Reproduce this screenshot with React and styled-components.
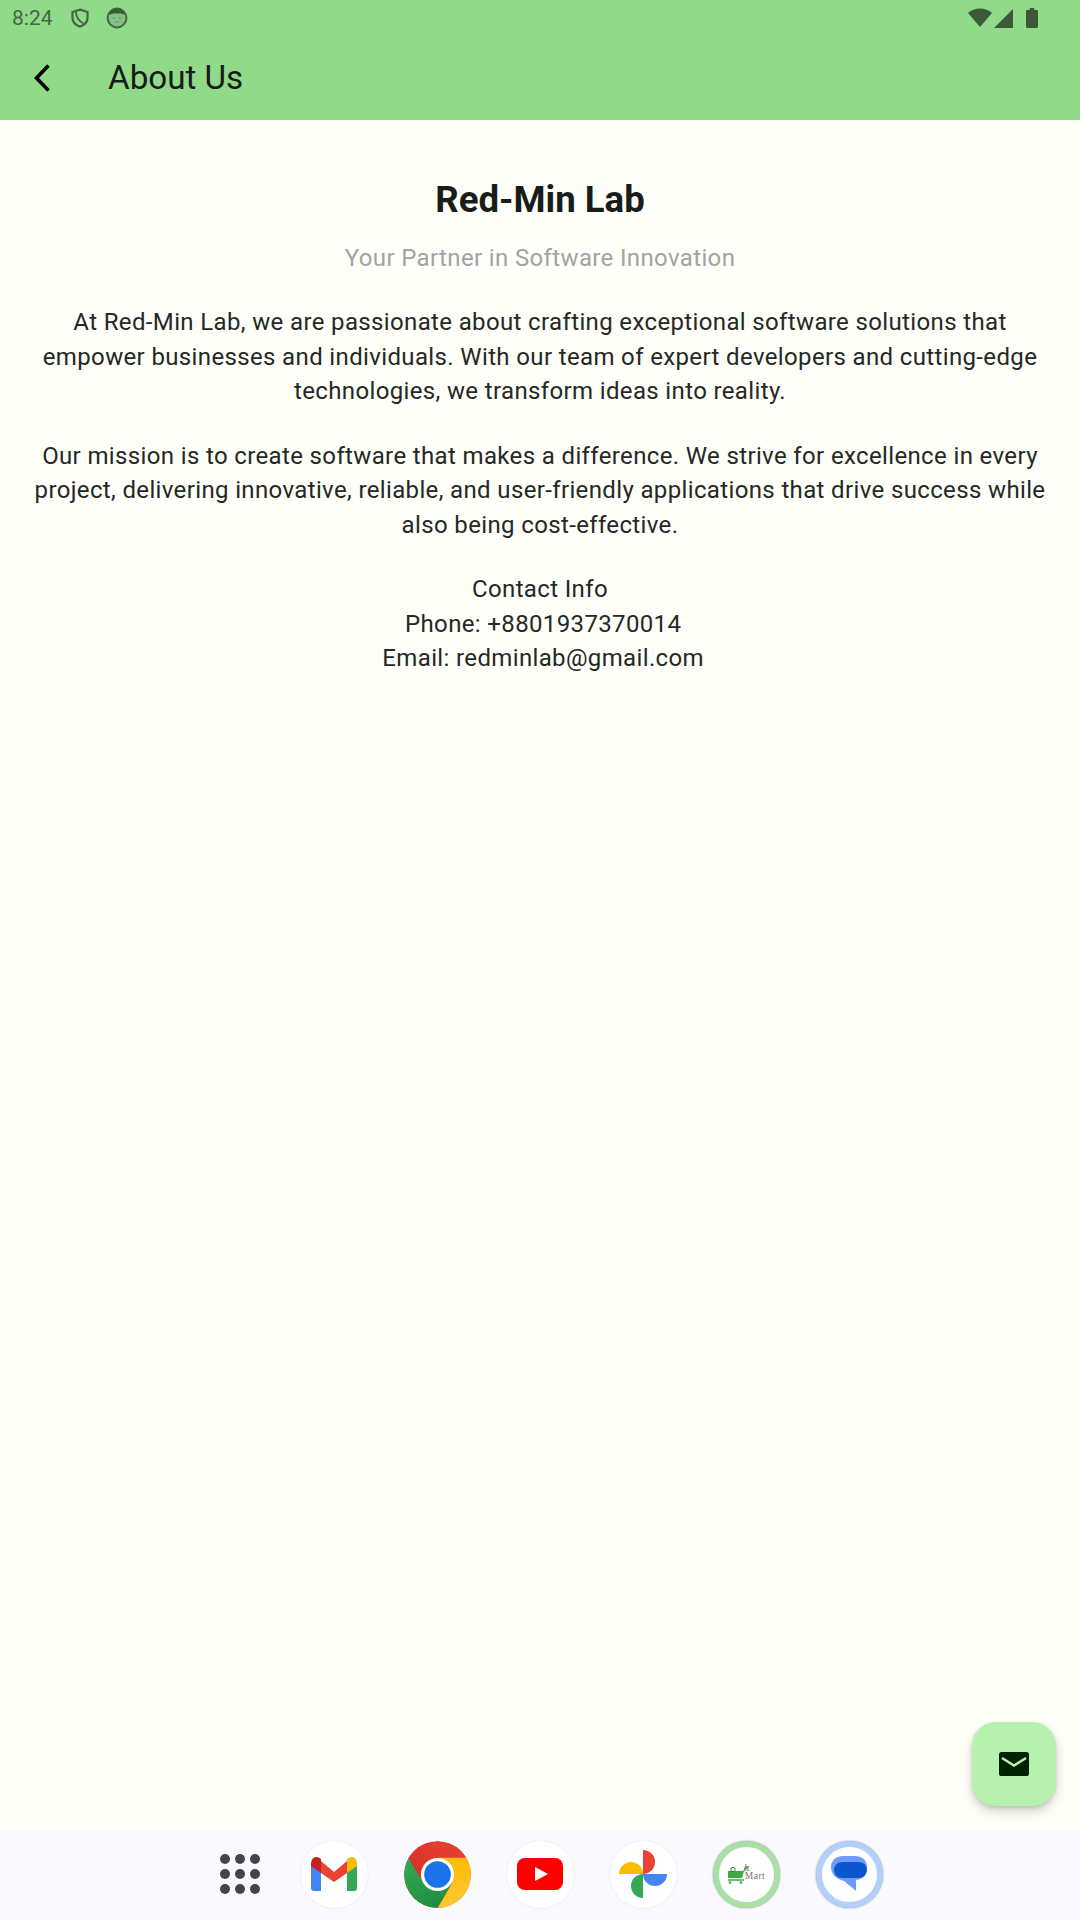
import styled, { createGlobalStyle } from "styled-components"

const Global = createGlobalStyle`
  html, body {
    margin: 0;
    padding: 0;
    background: #fdfff8;
  }
  * {
    box-sizing: border-box;
  }
`
const Page = styled.div`
  display: flex;
  flex-direction: column;
  font-family: Roboto, "Noto Sans", sans-serif;
  height: 1920px;
  width: 1080px;
`
const Top = styled.header`
  background-color: #90da8a;
  height: 120px;
`
const StatusBar = styled.div`
  align-items: center;
  color: #456643;
  display: flex;
  height: 36px;
  padding: 0 0 0 12px;
`
const Time = styled.span`
  font-size: 21px;
  margin-right: 17px;
`
const StatusIcon = styled.svg`
  display: block;
  margin-right: 16px;
`
const StatusRight = styled.div`
  align-items: center;
  display: flex;
  gap: 2px;
  margin-left: auto;
  margin-right: 42px;
`
const Battery = styled.svg`
  margin-left: 11px;
`
const AppBar = styled.div`
  align-items: center;
  display: flex;
  height: 84px;
  padding-left: 31px;
`
const Title = styled.h1`
  color: #191c18;
  font-size: 33.2px;
  font-weight: 400;
  margin: 0 0 2px 53px;
`
const Main = styled.main`
  flex: 1;
  padding-top: 58px;
  position: relative;
  text-align: center;
`
const Heading = styled.h2`
  color: #191c18;
  font-size: 36.6px;
  font-weight: 700;
  line-height: 44px;
  margin: 0;
`
const Subtitle = styled.p`
  color: #a3a3a3;
  font-size: 24px;
  letter-spacing: 0.36px;
  line-height: 34px;
  margin: 19px 0 0;
`
const Body = styled.p`
  color: #252825;
  font-size: 24px;
  letter-spacing: 0.36px;
  line-height: 34.5px;
  margin: 30px 0 0;
  padding: 0 30px;
`
const Fab = styled.div`
  align-items: center;
  background-color: #b6f2ae;
  border-radius: 24px;
  bottom: 24px;
  box-shadow: 0 6px 12px rgba(0, 0, 0, 0.16), 0 2px 4px rgba(0, 0, 0, 0.12);
  display: flex;
  height: 84px;
  justify-content: center;
  position: absolute;
  right: 24px;
  width: 84px;
`
const Dock = styled.footer`
  align-items: center;
  background-color: #f9f9ff;
  display: flex;
  gap: 36px;
  height: 90px;
  justify-content: center;
  padding: 0 0 2px 18px;
`
const DockItem = styled.div`
  align-items: center;
  background-color: #fff;
  border-radius: 50%;
  box-shadow: 0 0 2px rgba(0, 0, 0, 0.12);
  display: flex;
  flex: none;
  height: 67px;
  justify-content: center;
  overflow: hidden;
  width: 67px;
`
const AppsItem = styled.div`
  display: flex;
  flex: none;
  justify-content: center;
  width: 49px;
`
const ChromeItem = styled(DockItem)`
  background-color: transparent;
  box-shadow: none;
`
const RingItem = styled(DockItem)`
  border: 6.5px solid ${props => props.$ring};
  box-shadow: 0 0 2px rgba(0, 0, 0, 0.45);
`
const MartLogo = styled.div`
  align-items: flex-end;
  display: flex;
`
const MartLabel = styled.span`
  color: #777;
  font-family: "Liberation Serif", serif;
  font-size: 9.5px;
  letter-spacing: 0.5px;
  line-height: 8px;
  margin: 0 0 4px -4px;
  text-align: left;
`

const Shield = () => (
  <StatusIcon width="20" height="20" viewBox="0 0 20 20" fill="none" stroke="#456643" strokeWidth="2.2">
    <path d="M10 1.6 L17.5 4 V10 C17.5 14 14.5 17 10 18.6 C5.5 17 2.5 14 2.5 10 V4 Z" />
    <path d="M6 4 C6 9 9 13 13.5 15.5" strokeWidth="1.8" />
  </StatusIcon>
)

const Face = () => (
  <StatusIcon width="22" height="22" viewBox="0 0 22 22">
    <circle cx="11" cy="11" r="9.4" fill="#86c283" stroke="#456643" strokeWidth="2" />
    <path d="M3.5 8 C4 3 8 1.5 11 1.5 C14 1.5 18 3 18.5 8 L15 6.5 H7 Z" fill="#3c5a3a" />
    <circle cx="8" cy="11" r="0.9" fill="#5f9a5c" />
    <circle cx="14" cy="11" r="0.9" fill="#5f9a5c" />
    <path d="M8.5 15 H13.5" stroke="#5f9a5c" strokeWidth="1" />
  </StatusIcon>
)

const BackIcon = () => (
  <svg width="24" height="30" viewBox="0 0 24 30" fill="none">
    <path d="M17.5 2.5 L5.5 15 L17.5 27.5" stroke="#000" strokeWidth="3.6" />
  </svg>
)

const MailIcon = () => (
  <svg width="30" height="24" viewBox="0 0 30 24">
    <rect width="30" height="24" rx="2.6" fill="#002204" />
    <path d="M3 6 L15 13.5 L27 6" fill="none" stroke="#b6f2ae" strokeWidth="2.6" />
  </svg>
)

const Apps = () => (
  <svg width="40" height="40" viewBox="0 0 40 40" fill="#44444f">
    {[5, 20, 35].map(y => [5, 20, 35].map(x => (
      <circle key={`${x}-${y}`} cx={x} cy={y} r="5" />
    )))}
  </svg>
)

const Gmail = () => (
  <svg width="46" height="36" viewBox="0 0 46 36">
    <path d="M0 8 L10 15 V35 H3 C1 35 0 34 0 32 Z" fill="#4285f4" />
    <path d="M36 15 L46 8 V32 C46 34 45 35 43 35 H36 Z" fill="#34a853" />
    <path d="M10 5 L23 16 L36 5 V17 L23 26 L10 17 Z" fill="#ea4335" />
    <path d="M0 8 C0 1 6 -1 10 3 V17 L0 10 Z" fill="#c5221f" />
    <path d="M36 3 C40 -1 46 1 46 8 V10 L36 17 Z" fill="#fbbc04" />
  </svg>
)

const Chrome = () => (
  <svg width="67" height="67" viewBox="0 0 67 67">
    <defs>
      <linearGradient id="chromeRed" x1="0" y1="0.5" x2="1" y2="0">
        <stop offset="0" stopColor="#d93025" />
        <stop offset="1" stopColor="#ea4335" />
      </linearGradient>
      <linearGradient id="chromeGreen" x1="0.2" y1="0" x2="0.6" y2="1">
        <stop offset="0" stopColor="#34a853" />
        <stop offset="1" stopColor="#1e8e3e" />
      </linearGradient>
      <linearGradient id="chromeYellow" x1="0.5" y1="0" x2="0.5" y2="1">
        <stop offset="0" stopColor="#fbbc04" />
        <stop offset="1" stopColor="#fcc934" />
      </linearGradient>
    </defs>
    <circle cx="33.5" cy="33.5" r="33.5" fill="url(#chromeRed)" />
    <path d="M33.5 16.75 H62.5 A33.5 33.5 0 0 1 33.5 67 L48 42 Z" fill="url(#chromeYellow)" />
    <path d="M4.5 16.75 L19 42 L33.5 33.5 L48 42 L33.5 67 A33.5 33.5 0 0 1 4.5 16.75 Z" fill="url(#chromeGreen)" />
    <circle cx="33.5" cy="33.5" r="16.6" fill="#fff" />
    <circle cx="33.5" cy="33.5" r="13.3" fill="#1a73e8" />
  </svg>
)

const YouTube = () => (
  <svg width="46" height="32" viewBox="0 0 46 32">
    <rect width="46" height="32" rx="8" fill="#f00" />
    <path d="M18 9 L31 16 L18 23 Z" fill="#fff" />
  </svg>
)

const Photos = () => (
  <svg width="48" height="48" viewBox="0 0 48 48">
    <path d="M24 0 A12 12 0 0 1 24 24 Z" fill="#ea4335" />
    <path d="M48 24 A12 12 0 0 1 24 24 Z" fill="#4285f4" />
    <path d="M24 48 A12 12 0 0 1 24 24 Z" fill="#34a853" />
    <path d="M0 24 A12 12 0 0 1 24 24 Z" fill="#fbbc04" />
  </svg>
)

const Cart = () => (
  <svg width="22" height="18" viewBox="0 0 22 18">
    <path d="M1 5 H17 L15 12 H1 Z" fill="#3ea843" />
    <path d="M17 5 L18.5 1 H22 M1 14 H17" fill="none" stroke="#3ea843" strokeWidth="1.5" />
    <circle cx="6" cy="3.5" r="2.2" fill="#fff" stroke="#2d7a33" strokeWidth="1" />
    <circle cx="3" cy="16.5" r="1.3" fill="#3ea843" />
    <circle cx="14" cy="16.5" r="1.3" fill="#3ea843" />
  </svg>
)

const Messages = () => (
  <svg width="38" height="38" viewBox="0 0 38 38">
    <path d="M13 1 H25 C33 1 37 6 37 12 C37 20 32 25 26 25 L26 36 L14 26 C6 24 1 19 1 12 C1 6 5 1 13 1 Z" fill="#6f9cfb" />
    <rect x="4" y="7" width="33" height="16" rx="8" fill="#0b57d0" />
  </svg>
)

const App = () => {
  return (
    <Page>
      <Global />
      <Top>
        <StatusBar>
          <Time>8:24</Time>
          <Shield />
          <Face />
          <StatusRight>
            <svg width="24" height="20" viewBox="0 0 24 20">
              <path d="M0 5 C6 -1 18 -1 24 5 L12 19 Z" fill="#3c5a3a" />
            </svg>
            <svg width="19" height="19" viewBox="0 0 19 19">
              <path d="M19 0 V19 H0 Z" fill="#3c5a3a" />
            </svg>
            <Battery width="12" height="20" viewBox="0 0 12 20">
              <path d="M3.5 2 V1 C3.5 0.4 4 0 4.5 0 H7.5 C8 0 8.5 0.4 8.5 1 V2 H10.5 C11.4 2 12 2.6 12 3.5 V18.5 C12 19.4 11.4 20 10.5 20 H1.5 C0.6 20 0 19.4 0 18.5 V3.5 C0 2.6 0.6 2 1.5 2 Z" fill="#3c5a3a" />
            </Battery>
          </StatusRight>
        </StatusBar>
        <AppBar>
          <BackIcon />
          <Title>About Us</Title>
        </AppBar>
      </Top>
      <Main>
        <Heading>Red-Min Lab</Heading>
        <Subtitle>Your Partner in Software Innovation</Subtitle>
        <Body>
          At Red-Min Lab, we are passionate about crafting exceptional software solutions that<br />
          empower businesses and individuals. With our team of expert developers and cutting-edge<br />
          technologies, we transform ideas into reality.
        </Body>
        <Body>
          Our mission is to create software that makes a difference. We strive for excellence in every<br />
          project, delivering innovative, reliable, and user-friendly applications that drive success while<br />
          also being cost-effective.
        </Body>
        <Body>
          Contact Info<br />
          {"\u00a0"}Phone: +8801937370014<br />
          {"\u00a0"}Email: redminlab@gmail.com
        </Body>
        <Fab>
          <MailIcon />
        </Fab>
      </Main>
      <Dock>
        <AppsItem><Apps /></AppsItem>
        <DockItem><Gmail /></DockItem>
        <ChromeItem><Chrome /></ChromeItem>
        <DockItem><YouTube /></DockItem>
        <DockItem><Photos /></DockItem>
        <RingItem $ring="#a8e0a6">
          <MartLogo>
            <Cart />
            <MartLabel>k<br />Mart</MartLabel>
          </MartLogo>
        </RingItem>
        <RingItem $ring="#b3d0fb"><Messages /></RingItem>
      </Dock>
    </Page>
  )
}

export default App
